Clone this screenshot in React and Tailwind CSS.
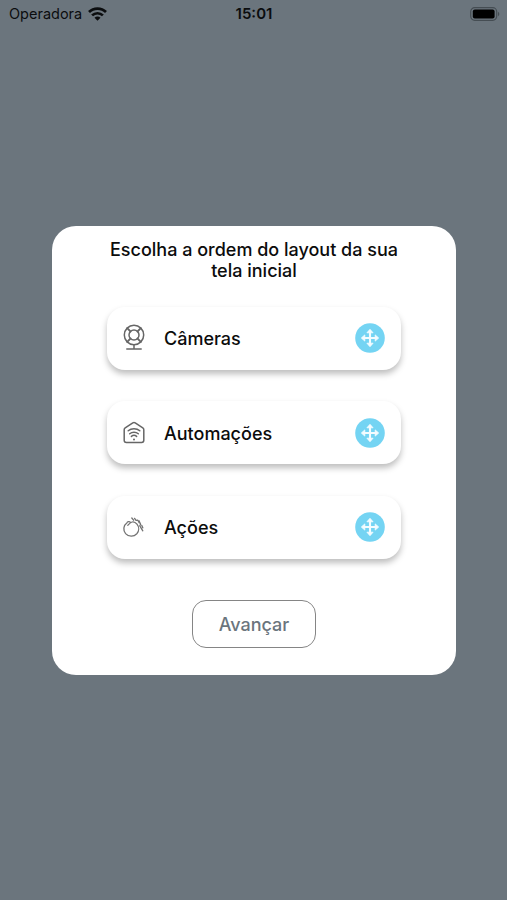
import React from "react";

function WifiIcon() {
  return (
    <svg width="19" height="14" viewBox="0 0 19 14" fill="none" stroke="#0b0d0f" strokeWidth="2.7">
      <path d="M1 5 C5.6 0.4 13.4 0.4 18 5" />
      <path d="M4.1 8.4 C7.1 5.5 11.9 5.5 14.9 8.4" />
      <path d="M9.5 13.8 L6.5 10.8 C8.2 9.2 10.8 9.2 12.5 10.8 Z" fill="#0b0d0f" stroke="none" />
    </svg>
  );
}

function BatteryIcon() {
  return (
    <svg width="30" height="14" viewBox="0 0 30 14">
      <rect x="0.7" y="0.7" width="26" height="12.6" rx="4" fill="none" stroke="#454d53" strokeWidth="1.2" />
      <rect x="2.8" y="2.4" width="21.8" height="9.2" rx="2" fill="#000" />
      <path d="M28 4.8 C29.8 5.6 29.8 8.4 28 9.2 Z" fill="#454d53" />
    </svg>
  );
}

function CameraIcon() {
  return (
    <svg width="24" height="28" viewBox="0 0 24 28" fill="none" stroke="#666" strokeWidth="1.5" strokeLinecap="round">
      <circle cx="12" cy="11" r="9.7" />
      <circle cx="12" cy="11" r="5" />
      <path d="M5.2 4.2 L8.5 7.5 M18.8 4.2 L15.5 7.5 M5.2 17.8 L8.5 14.5 M18.8 17.8 L15.5 14.5" strokeWidth="1.8" />
      <path d="M12 20.8 V24.7 M4.8 24.9 H19.2" />
    </svg>
  );
}

function HomeWifiIcon() {
  return (
    <svg width="24" height="28" viewBox="0 0 24 28" fill="none" stroke="#666" strokeWidth="1.5" strokeLinecap="round" strokeLinejoin="round">
      <path d="M2.2 10.8 Q2.2 9.5 3.2 8.8 L10.8 3.8 Q12 3.1 13.2 3.8 L20.8 8.8 Q21.8 9.5 21.8 10.8 V21.2 Q21.8 23.4 19.6 23.4 H4.4 Q2.2 23.4 2.2 21.2 Z" />
      <path d="M6.2 11.8 C9.4 8.9 14.6 8.9 17.8 11.8" />
      <path d="M7.7 14.7 C10.1 12.6 13.9 12.6 16.3 14.7" />
      <path d="M9.4 17.4 C10.8 16.2 13.2 16.2 14.6 17.4" />
      <circle cx="12" cy="20.5" r="1" fill="#666" stroke="none" />
    </svg>
  );
}

function ClapIcon() {
  return (
    <svg width="24" height="28" viewBox="0 0 24 28" fill="none" stroke="#727272" strokeWidth="1.3" strokeLinecap="round" strokeLinejoin="round">
      <path d="M8.6 9.4 C7.4 8.2 5.4 8.4 4.8 10 C1.3 12.4 0.9 17.4 3.6 20.6 C6.6 24 11.8 24 14.8 20.8 C17.3 18 17.2 14 15 11.2 C13.4 9.2 11.4 8.6 10 9 C8 9.6 7.2 11 5.8 12.4" />
      <path d="M9.8 5 L11.6 7.2 M12.6 5.4 L14 7.4 L15.8 7.2 L17.2 9.8" />
      <path d="M17 7.8 L18.6 11.2 L17.8 12.8 L20.8 17.8 M19.8 12.4 L20.8 14.8" />
    </svg>
  );
}

function MoveIcon() {
  return (
    <svg width="30" height="30" viewBox="0 0 30 30" className="shrink-0">
      <circle cx="15" cy="15" r="14.8" fill="#74d4f3" />
      <path d="M15 9 V21 M9 15 H21" stroke="#f4fcff" strokeWidth="2.1" />
      <path
        d="M15 6.3 L18.1 9.8 H11.9 Z M15 23.7 L18.1 20.2 H11.9 Z M6.3 15 L9.8 11.9 V18.1 Z M23.7 15 L20.2 11.9 V18.1 Z"
        fill="#f4fcff"
        stroke="#f4fcff"
        strokeWidth="0.8"
        strokeLinejoin="round"
      />
    </svg>
  );
}

const sections = [
  { label: "Câmeras", Icon: CameraIcon },
  { label: "Automações", Icon: HomeWifiIcon },
  { label: "Ações", Icon: ClapIcon },
];

function StatusBar() {
  return (
    <header className="grid h-7 grid-cols-3 items-center pl-[9px] pr-[7px] text-[#0b0d0f]">
      <div className="flex items-center gap-1.5 text-[14.5px]">
        <span>Operadora</span>
        <WifiIcon />
      </div>
      <span className="pr-px text-center text-[15px] font-semibold">15:01</span>
      <div className="flex justify-end">
        <BatteryIcon />
      </div>
    </header>
  );
}

export default function App() {
  return (
    <div className="flex h-screen flex-col bg-[#6b757d] font-['Inter',sans-serif]">
      <StatusBar />
      <main className="flex flex-1 items-center justify-center pb-[27px] pl-px">
        <div className="flex h-[449.5px] w-[404.5px] flex-col items-center rounded-[24px] bg-white pt-[13px]">
          <h1 className="w-[300px] text-center text-[18px] font-medium leading-[21px] text-[#0c0c0c]">
            Escolha a ordem do layout da sua tela inicial
          </h1>
          <ul className="mt-[26px] flex flex-col gap-[31.5px]">
            {sections.map(({ label, Icon }) => (
              <li
                key={label}
                className="flex h-[63px] w-[294px] items-center rounded-[18px] bg-white pl-[15px] pr-[16.5px] shadow-[0_4px_6px_rgba(0,0,0,0.26)]"
              >
                <Icon />
                <span className="ml-[18px] flex-1 pt-px text-[18px] font-medium text-[#0c0c0c]">{label}</span>
                <MoveIcon />
              </li>
            ))}
          </ul>
          <button className="mt-[41px] h-[48.5px] w-[124px] rounded-[14px] border border-[#858585] pt-px text-[18px] font-medium text-[#6b757d]">
            Avançar
          </button>
        </div>
      </main>
    </div>
  );
}
